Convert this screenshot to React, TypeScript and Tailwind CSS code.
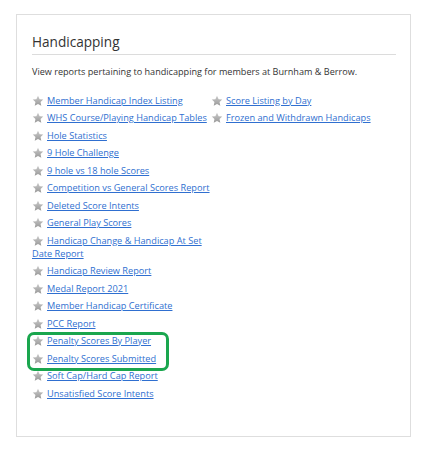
import React from "react";

const Star = () => (
  <svg width="12" height="12" viewBox="0 0 24 24" className="inline-block align-[-1px] -my-[2px] mr-[3px]">
    <defs>
      <linearGradient id="sg" x1="0" y1="0" x2="0" y2="1">
        <stop offset="0" stopColor="#cacaca" />
        <stop offset="1" stopColor="#999999" />
      </linearGradient>
    </defs>
    <path
      d="M12 1.5l3.2 6.9 7.3.8-5.4 5 1.5 7.3L12 17.8l-6.6 3.7 1.5-7.3-5.4-5 7.3-.8z"
      fill="url(#sg)"
    />
  </svg>
);

const Item = ({ label }: { label: string }) => (
  <div className="mb-[4.5px] leading-[13px]">
    <Star />
    <a href="#" className="text-[#2f6fd0] underline decoration-[#2f6fd0] underline-offset-[1px]">
      {label}
    </a>
  </div>
);

const col1 = [
  "Member Handicap Index Listing",
  "WHS Course/Playing Handicap Tables",
  "Hole Statistics",
  "9 Hole Challenge",
  "9 hole vs 18 hole Scores",
  "Competition vs General Scores Report",
  "Deleted Score Intents",
  "General Play Scores",
  "Handicap Change & Handicap At Set Date Report",
  "Handicap Review Report",
  "Medal Report 2021",
  "Member Handicap Certificate",
  "PCC Report",
  "Penalty Scores By Player",
  "Penalty Scores Submitted",
  "Soft Cap/Hard Cap Report",
  "Unsatisfied Score Intents",
];

const col2 = ["Score Listing by Day", "Frozen and Withdrawn Handicaps"];

export default function App() {
  return (
    <div className="w-[427px] h-[453px] bg-white pt-[14px] pl-[16px]" style={{ fontFamily: '"Open Sans", sans-serif' }}>
      <div className="w-[395px] h-[423px] border border-[#dedede] px-[15px] pt-[16px]">
        <h2 className="text-[13.6px] leading-[21px] text-[#333] font-normal">Handicapping</h2>
        <div className="mt-[2px] h-[1px] bg-[#dcdcdc] w-[364px]" />
        <p className="mt-[10px] text-[9.1px] leading-[14px] text-[#333]">
          View reports pertaining to handicapping for members at Burnham &amp; Berrow.
        </p>
        <div className="mt-[14.5px] flex text-[9.2px]">
          <div className="w-[179px] relative">
            {col1.map((l) => (
              <Item key={l} label={l} />
            ))}
            <div className="absolute left-[-5px] top-[238.5px] w-[142px] h-[39px] border-[3.5px] border-[#1aa64e] rounded-[7px] pointer-events-none" />
          </div>
          <div>
            {col2.map((l) => (
              <Item key={l} label={l} />
            ))}
          </div>
        </div>
      </div>
    </div>
  );
}
